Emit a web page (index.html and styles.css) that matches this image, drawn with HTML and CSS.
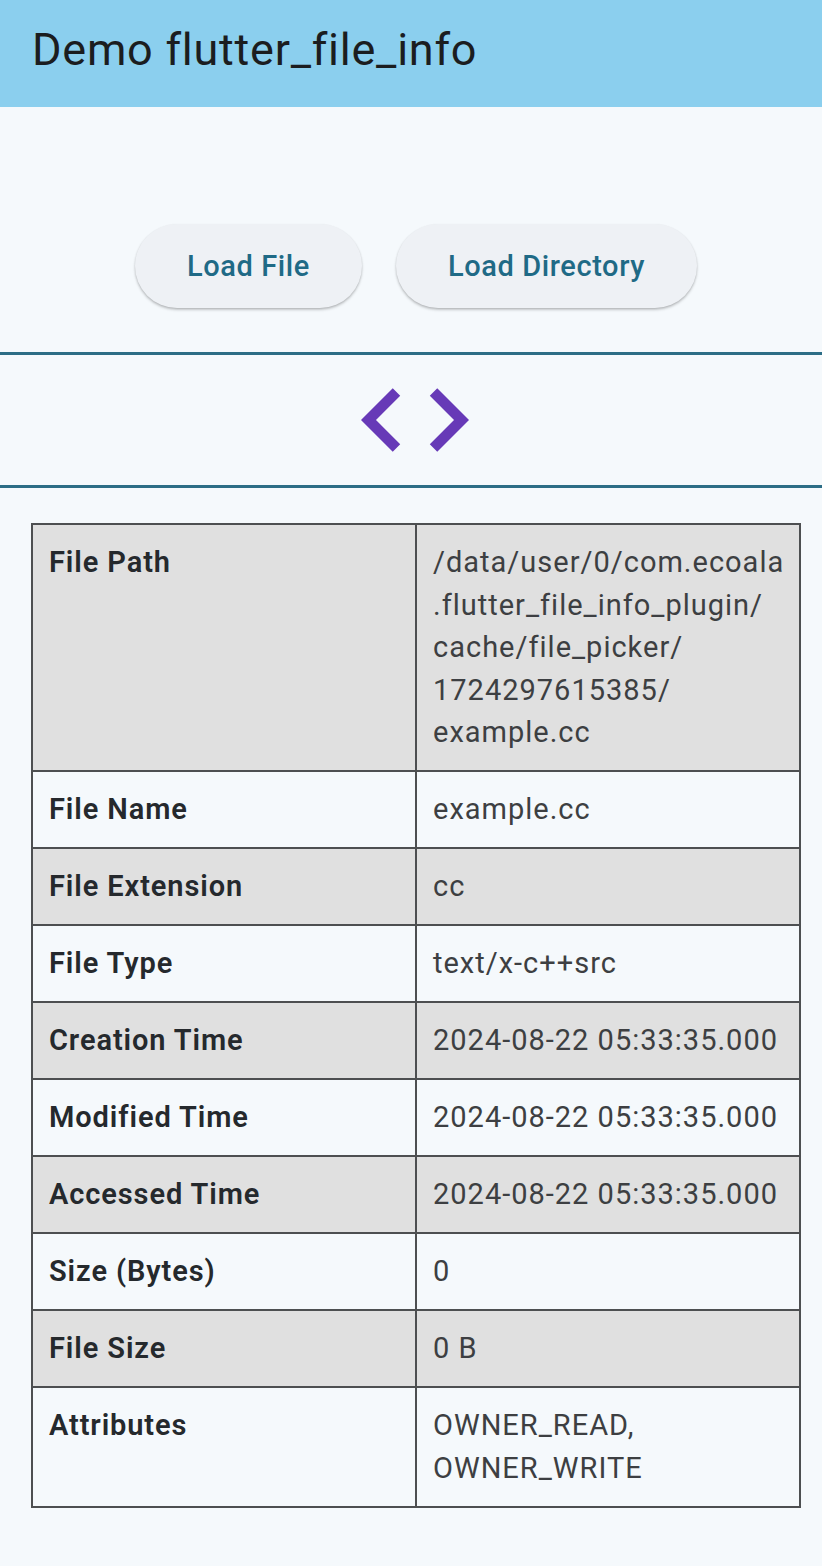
FILE: index.html
```html
<!DOCTYPE html>
<html>
<head>
<meta charset="utf-8">
<link rel="stylesheet" href="styles.css">
</head>
<body>
<header class="appbar"><h1 class="title">Demo flutter_file_info</h1></header>
<main class="content">
  <div class="actions">
    <button class="btn">Load File</button>
    <button class="btn">Load Directory</button>
  </div>
  <div class="nav">
    <svg class="chevrons" width="108" height="64" viewBox="0 0 20.41 12">
      <path d="M7.41 1.41L6 0 0 6l6 6 1.41-1.41L2.83 6z" fill="#673ab7"/>
      <path d="M14.41 0L13 1.41 17.58 6 13 10.59 14.41 12l6-6z" fill="#673ab7"/>
    </svg>
  </div>
  <div class="table-wrap">
    <table class="info">
      <tr class="alt"><th>File Path</th><td class="path">/data/user/0/com.ecoala<br>.flutter_file_info_plugin/<br>cache/file_picker/<br>1724297615385/<br>example.cc</td></tr>
      <tr><th>File Name</th><td>example.cc</td></tr>
      <tr class="alt"><th>File Extension</th><td>cc</td></tr>
      <tr><th>File Type</th><td>text/x-c++src</td></tr>
      <tr class="alt"><th>Creation Time</th><td>2024-08-22 05:33:35.000</td></tr>
      <tr><th>Modified Time</th><td>2024-08-22 05:33:35.000</td></tr>
      <tr class="alt"><th>Accessed Time</th><td>2024-08-22 05:33:35.000</td></tr>
      <tr><th>Size (Bytes)</th><td>0</td></tr>
      <tr class="alt"><th>File Size</th><td>0 B</td></tr>
      <tr><th>Attributes</th><td>OWNER_READ,<br>OWNER_WRITE</td></tr>
    </table>
  </div>
</main>
</body>
</html>
```
FILE: styles.css
```css
html, body {
  margin: 0;
  padding: 0;
}
body {
  background: #f5f9fc;
  font-family: Roboto, "Noto Sans", sans-serif;
  width: 822px;
  min-height: 1566px;
}
.appbar {
  background: #8bcfee;
  height: 107px;
  display: flex;
  align-items: center;
  padding-left: 32px;
  box-sizing: border-box;
}
.title {
  margin: 0;
  font-weight: 400;
  font-size: 45px;
  letter-spacing: 0.75px;
  color: #1b1d1f;
  line-height: 1;
  padding-bottom: 8px;
}
.content {
  display: flex;
  flex-direction: column;
}
.actions {
  display: flex;
  justify-content: center;
  gap: 34px;
  padding: 117px 0 44px 10px;
  border-bottom: 3px solid #2c6d86;
}
.btn {
  height: 84px;
  padding: 0 52px;
  border: none;
  border-radius: 42px;
  background: #eef1f5;
  color: #1f6a86;
  font-family: Roboto, sans-serif;
  font-weight: 500;
  font-size: 29px;
  letter-spacing: 0.6px;
  box-shadow: 0 2px 3px rgba(0,0,0,0.18), 0 1px 2px rgba(0,0,0,0.12);
}
.nav {
  display: flex;
  justify-content: center;
  padding: 33px 0 33px 8px;
  border-bottom: 3px solid #2c6d86;
}
.chevrons {
  display: block;
}
.table-wrap {
  padding: 35px 21px 0 31px;
}
.info {
  width: 100%;
  border-collapse: collapse;
  border: 2px solid #4d4f51;
  table-layout: fixed;
}
.info th, .info td {
  border: 2px solid #4d4f51;
  padding: 16px 16px;
  text-align: left;
  vertical-align: top;
  font-size: 29px;
  line-height: 43px;
  width: 50%;
}
.info td.path {
  line-height: 42.6px;
}
.info th {
  font-weight: 600;
  letter-spacing: 0.9px;
  color: #25292d;
}
.info td {
  font-weight: 400;
  letter-spacing: 1px;
  color: #3d3f42;
}
.info tr.alt th, .info tr.alt td {
  background: #e0e0e0;
}
```
